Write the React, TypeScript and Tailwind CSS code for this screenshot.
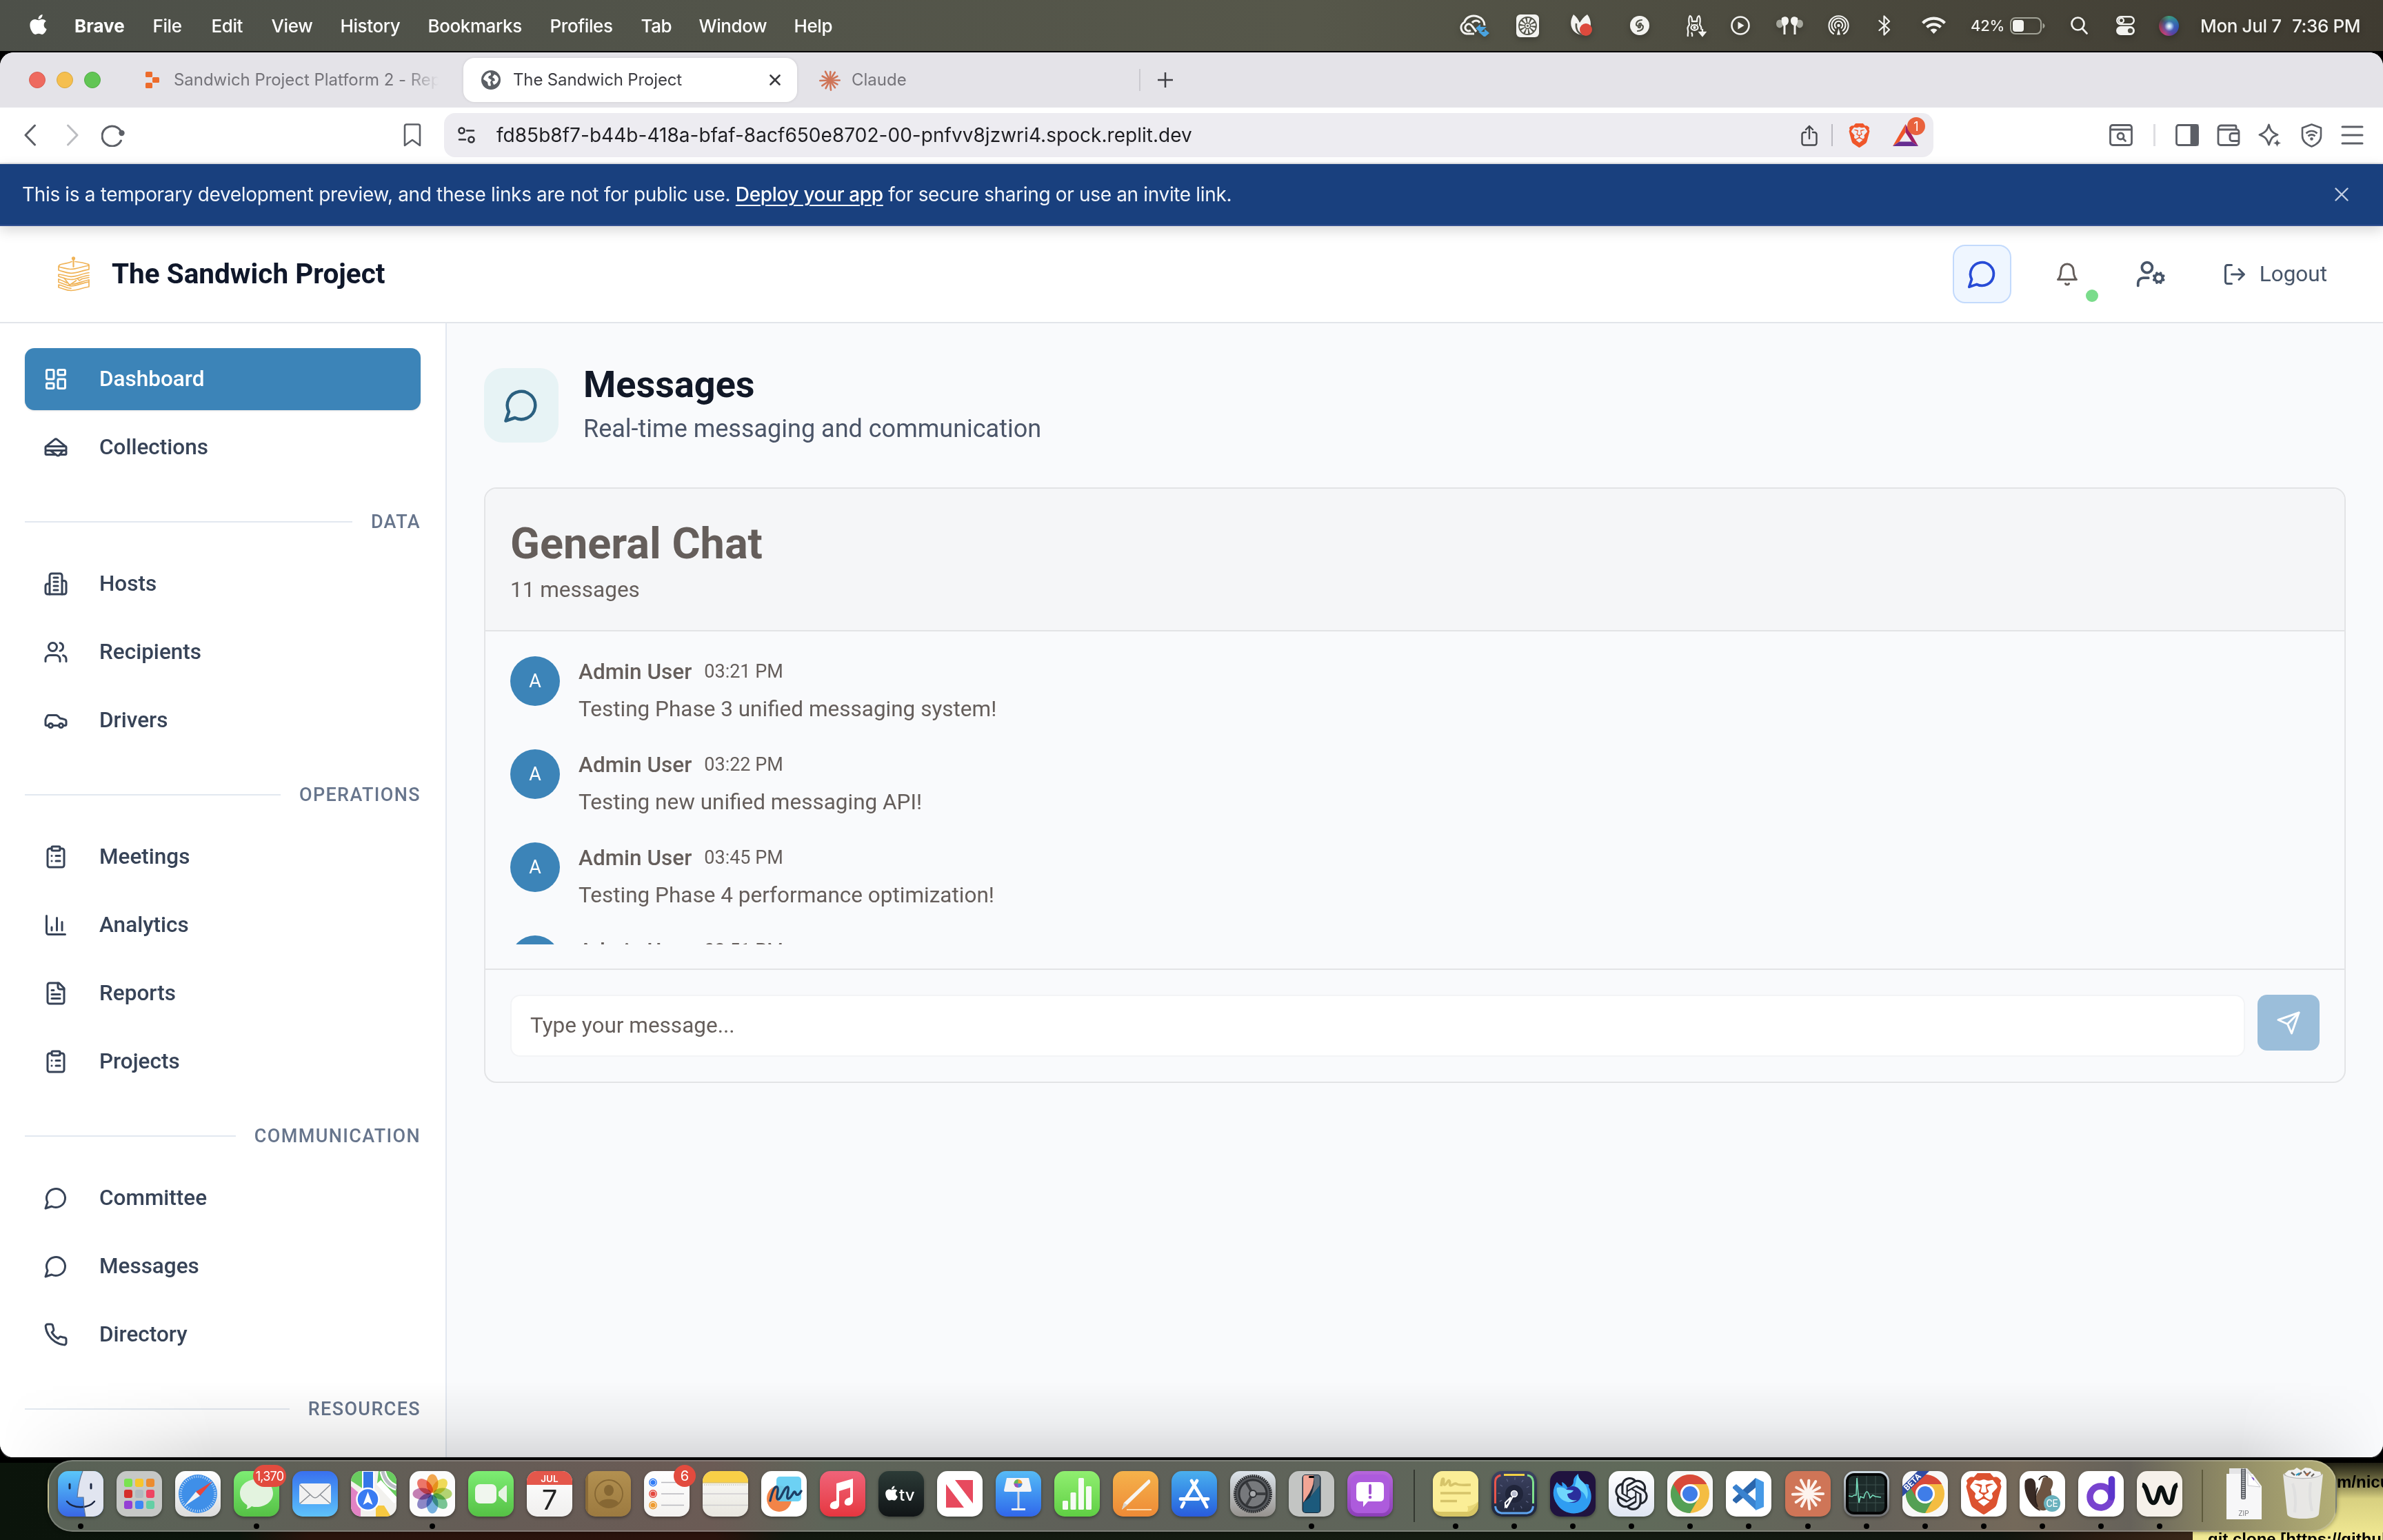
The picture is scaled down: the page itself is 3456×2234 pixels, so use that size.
import React from "react";
import { UserCog } from "lucide-react";
import { FaApple } from "react-icons/fa";
import { SiBrave, SiOpenai } from "react-icons/si";

type IconProps = { className?: string };

/* ---------- outline icons on a 24 unit grid ---------- */

function Outline({ className, children }: { className?: string; children: React.ReactNode }) {
  return (
    <svg viewBox="0 0 24 24" fill="none" stroke="currentColor" strokeWidth={2} strokeLinecap="round" strokeLinejoin="round" className={className}>
      {children}
    </svg>
  );
}

const DashboardIcon = ({ className }: IconProps) => (
  <Outline className={className}>
    <rect width="7" height="9" x="3" y="3" rx="1" />
    <rect width="7" height="5" x="14" y="3" rx="1" />
    <rect width="7" height="9" x="14" y="12" rx="1" />
    <rect width="7" height="5" x="3" y="16" rx="1" />
  </Outline>
);
const SandwichIcon = ({ className }: IconProps) => (
  <Outline className={className}>
    <path d="m2.37 11.223 8.372-6.777a2 2 0 0 1 2.516 0l8.371 6.777" />
    <path d="M21 15a1 1 0 0 1 1 1v2a1 1 0 0 1-1 1h-5.25" />
    <path d="M3 15a1 1 0 0 0-1 1v2a1 1 0 0 0 1 1h9" />
    <path d="m6.67 15 6.13 4.6a2 2 0 0 0 2.8-.4l3.15-4.2" />
    <rect width="20" height="4" x="2" y="11" rx="1" />
  </Outline>
);
const BuildingIcon = ({ className }: IconProps) => (
  <Outline className={className}>
    <path d="M6 22V4a2 2 0 0 1 2-2h8a2 2 0 0 1 2 2v18Z" />
    <path d="M6 12H4a2 2 0 0 0-2 2v6a2 2 0 0 0 2 2h2" />
    <path d="M18 9h2a2 2 0 0 1 2 2v9a2 2 0 0 1-2 2h-2" />
    <path d="M10 6h4M10 10h4M10 14h4M10 18h4" />
  </Outline>
);
const UsersIcon = ({ className }: IconProps) => (
  <Outline className={className}>
    <path d="M16 21v-2a4 4 0 0 0-4-4H6a4 4 0 0 0-4 4v2" />
    <circle cx="9" cy="7" r="4" />
    <path d="M22 21v-2a4 4 0 0 0-3-3.87" />
    <path d="M16 3.13a4 4 0 0 1 0 7.75" />
  </Outline>
);
const CarIcon = ({ className }: IconProps) => (
  <Outline className={className}>
    <path d="M19 17h2c.6 0 1-.4 1-1v-3c0-.9-.7-1.7-1.5-1.9C18.7 10.6 16 10 16 10s-1.3-1.4-2.2-2.3c-.5-.4-1.1-.7-1.8-.7H5c-.6 0-1.1.4-1.4.9l-1.4 2.9A3.7 3.7 0 0 0 2 12v4c0 .6.4 1 1 1h2" />
    <circle cx="7" cy="17" r="2" />
    <path d="M9 17h6" />
    <circle cx="17" cy="17" r="2" />
  </Outline>
);
const ClipboardIcon = ({ className }: IconProps) => (
  <Outline className={className}>
    <rect width="8" height="4" x="8" y="2" rx="1" />
    <path d="M16 4h2a2 2 0 0 1 2 2v14a2 2 0 0 1-2 2H6a2 2 0 0 1-2-2V6a2 2 0 0 1 2-2h2" />
    <path d="M12 11h4M12 16h4M8 11h.01M8 16h.01" />
  </Outline>
);
const ChartIcon = ({ className }: IconProps) => (
  <Outline className={className}>
    <path d="M3 3v16a2 2 0 0 0 2 2h16" />
    <path d="M18 17V9M13 17V5M8 17v-3" />
  </Outline>
);
const FileIcon = ({ className }: IconProps) => (
  <Outline className={className}>
    <path d="M15 2H6a2 2 0 0 0-2 2v16a2 2 0 0 0 2 2h12a2 2 0 0 0 2-2V7Z" />
    <path d="M14 2v4a2 2 0 0 0 2 2h4" />
    <path d="M10 9H8M16 13H8M16 17H8" />
  </Outline>
);
const ChatIcon = ({ className }: IconProps) => (
  <Outline className={className}>
    <path d="M7.9 20A9 9 0 1 0 4 16.1L2 22Z" />
  </Outline>
);
const PhoneIcon = ({ className }: IconProps) => (
  <Outline className={className}>
    <path d="M22 16.92v3a2 2 0 0 1-2.18 2 19.79 19.79 0 0 1-8.63-3.07 19.5 19.5 0 0 1-6-6 19.79 19.79 0 0 1-3.07-8.67A2 2 0 0 1 4.11 2h3a2 2 0 0 1 2 1.72 12.84 12.84 0 0 0 .7 2.81 2 2 0 0 1-.45 2.11L8.09 9.91a16 16 0 0 0 6 6l1.27-1.27a2 2 0 0 1 2.11-.45 12.84 12.84 0 0 0 2.81.7A2 2 0 0 1 22 16.92z" />
  </Outline>
);
const BellIcon = ({ className }: IconProps) => (
  <Outline className={className}>
    <path d="M6 8a6 6 0 0 1 12 0c0 7 3 9 3 9H3s3-2 3-9" />
    <path d="M10.3 21a1.94 1.94 0 0 0 3.4 0" />
  </Outline>
);
const LogOutIcon = ({ className }: IconProps) => (
  <Outline className={className}>
    <path d="M9 21H5a2 2 0 0 1-2-2V5a2 2 0 0 1 2-2h4" />
    <path d="m16 17 5-5-5-5M21 12H9" />
  </Outline>
);
const SendIcon = ({ className }: IconProps) => (
  <Outline className={className}>
    <path d="m22 2-7 20-4-9-9-4Z" />
    <path d="M22 2 11 13" />
  </Outline>
);

/* ---------- macOS menu bar ---------- */

function StatusIcons() {
  return (
    <div className="flex h-full items-center text-[#f3f3f0] drop-shadow-[0_3px_4px_rgba(0,0,0,0.25)]">
      <svg viewBox="0 0 44 32" className="h-8 w-11" fill="none" stroke="currentColor" strokeWidth="3">
        <path d="M22 28H11a9 9 0 0 1-3-17C10 4 19 0 27 3c6 2 10 7 10 13" />
        <path d="M17 23c-5 3-10-2-7-7 3-4 7-2 9 1l6 8M19 12c3-4 9-4 11 0" />
        <path d="M24 20h9v-4l7 6-7 6z" fill="#4aa3df" stroke="none" transform="translate(64 -2) scale(-1 1)" />
        <path d="M28 25h9v-4l7 6-7 6z" fill="#4aa3df" stroke="none" />
      </svg>
      <svg viewBox="0 0 33 33" className="ml-[39px] size-[33px]">
        <rect width="33" height="33" rx="6" fill="currentColor" />
        <circle cx="16.5" cy="16.5" r="12.5" fill="none" stroke="#53544a" strokeWidth="1.8" />
        <circle cx="16.5" cy="16.5" r="8" fill="none" stroke="#53544a" strokeWidth="8" strokeDasharray="2 3" />
        <circle cx="16.5" cy="16.5" r="4" fill="#f3f3f0" stroke="#53544a" strokeWidth="1.5" />
        <circle cx="16.5" cy="16.5" r="1.6" fill="#53544a" />
      </svg>
      <svg viewBox="0 0 34 32" className="ml-[43px] h-8 w-[34px]">
        <path d="M7 0c4 3 7 7 9 12 3-5 6-9 11-12 5 6 6 14 4 20l-11 10C6 29-2 15 7 0z" fill="currentColor" />
        <path d="M11 13c-1 8 3 14 9 17" stroke="#53544a" strokeWidth="2.5" fill="none" />
        <circle cx="25" cy="22" r="9" fill="#dc4a3d" />
      </svg>
      <svg viewBox="0 0 28 28" className="ml-[55px] size-7">
        <circle cx="14" cy="14" r="14" fill="currentColor" />
        <path d="M17 6c-5 0-8 3-8 6 0 4 6 3 7 1 1-3-3-3-3 0M11 22c5 0 8-3 8-6 0-4-6-3-7-1-1 3 3 3 3 0" stroke="#53544a" strokeWidth="2.2" fill="none" strokeLinecap="round" />
      </svg>
      <svg viewBox="0 0 30 33" className="ml-[53px] h-[33px] w-[30px]" fill="none" stroke="currentColor" strokeWidth="2.3">
        <path d="M3 32c-1-4 1-6 0-9s0-6 2-8c-1-5-1-11 1-13 3 1 3 5 3 8h7c0-3 0-7 3-8 2 2 2 8 1 13 2 2 3 4 2 7" />
        <ellipse cx="12.500" cy="19" rx="5" ry="3.8" />
        <circle cx="12.500" cy="19" r="1" fill="currentColor" />
        <path d="M8 14.500h1M16 14.500h1" />
        <path d="M9 32c1-3 0-4-1-6" />
        <path d="M24 21v9M20 26l4 5 4-5z" fill="currentColor" />
      </svg>
      <svg viewBox="0 0 28 28" className="ml-[35px] size-7">
        <circle cx="14" cy="14" r="12.500" fill="none" stroke="currentColor" strokeWidth="2.600" />
        <path d="M10.500 8.500v11l9-5.500z" fill="currentColor" />
      </svg>
      <svg viewBox="0 0 39 27" className="ml-[38px] h-[27px] w-[39px]">
        <ellipse cx="5" cy="10.500" rx="5" ry="6" fill="#a5a69c" />
        <ellipse cx="34" cy="10.500" rx="5" ry="6" fill="#a5a69c" />
        <path d="M8 2c5-3.500 10-1.500 10 4 0 4-2.500 6-4.500 7v13H10.500V14C8 10 7 6 8 2z" fill="currentColor" />
        <path d="M31 2c-5-3.500-10-1.500-10 4 0 4 2.500 6 4.500 7v13h3V14c2.500-4 3.500-8 2.500-12z" fill="currentColor" />
      </svg>
      <svg viewBox="0 0 31 30" className="ml-9 h-[30px] w-[31px]" fill="none" stroke="currentColor" strokeWidth="2.100" strokeLinecap="round">
        <path d="M8 27A14 14 0 1 1 23 27" />
        <path d="M9.500 22.500A10 10 0 1 1 21.500 22.500" />
        <path d="M11.500 18.500A5.700 5.700 0 1 1 19.500 18.500" />
        <circle cx="15.500" cy="15" r="2.200" fill="currentColor" stroke="none" />
        <path d="M15.500 19l2.500 9.500h-5z" fill="currentColor" stroke="none" />
      </svg>
      <svg viewBox="0 0 18 30" className="ml-[42px] h-[30px] w-[18px]" fill="none" stroke="currentColor" strokeWidth="2.300" strokeLinejoin="round" strokeLinecap="round">
        <path d="M1.500 8l14.500 13-7.500 7.500V1.500L16 9 1.500 22" />
      </svg>
      <svg viewBox="0 0 35 26" className="ml-[45px] h-[26px] w-[35px]" fill="none" stroke="currentColor" strokeWidth="4.200">
        <path d="M1.500 9.500a22 22 0 0 1 32 0" />
        <path d="M7.500 15.500a14 14 0 0 1 20 0" />
        <path d="M17.500 25l-5-5.500a7 7 0 0 1 10 0z" fill="currentColor" stroke="none" />
      </svg>
      <span className="ml-9 w-[50px] text-[22px] tracking-[-0.3px]">42%</span>
      <svg viewBox="0 0 51 25" className="ml-[7px] h-[25px] w-[51px]">
        <rect x="1" y="1" width="44" height="23" rx="7" fill="none" stroke="#a2a397" strokeWidth="2" />
        <rect x="4" y="4" width="16" height="17" rx="4" fill="currentColor" />
        <path d="M47.500 8.500c4 1.500 4 6.500 0 8z" fill="#a2a397" />
      </svg>
      <svg viewBox="0 0 25 26" className="ml-[37px] h-[26px] w-[25px]" fill="none" stroke="currentColor" strokeWidth="2.700" strokeLinecap="round">
        <circle cx="10.500" cy="10.500" r="9" />
        <path d="M17 17.500l6.500 7" />
      </svg>
      <svg viewBox="0 0 27 28" className="ml-[41px] h-7 w-[27px]">
        <rect x="1.200" y="1.200" width="24.600" height="11" rx="5.500" fill="none" stroke="currentColor" strokeWidth="2.400" />
        <circle cx="7.500" cy="6.700" r="3.500" fill="none" stroke="currentColor" strokeWidth="2.200" />
        <rect y="15" width="27" height="13" rx="6.500" fill="currentColor" />
        <circle cx="20.500" cy="21.500" r="3.600" fill="#4c4b41" />
      </svg>
      <span className="ml-[35px] size-[29px] rounded-full bg-[radial-gradient(circle_at_52%_52%,#ffffff_0%,rgba(190,225,250,0.9)_14%,rgba(70,100,190,0.6)_34%,transparent_60%),conic-gradient(#3f9c7c,#2b7f9e,#3450b0,#5a3fa0,#c23f7a,#a03a56,#4a4a50,#3f9c7c)]" />
      <span className="ml-[31px] w-[133px] text-[26px] tracking-[-0.35px]">Mon Jul 7</span>
      <span className="text-[26px] tracking-[-0.4px]">7:36 PM</span>
    </div>
  );
}

const MENUS: [string, string][] = [
  ["File", "w-[85px]"],
  ["Edit", "w-[87px]"],
  ["View", "w-[100px]"],
  ["History", "w-[127px]"],
  ["Bookmarks", "w-[177px]"],
  ["Profiles", "w-[132px]"],
  ["Tab", "w-[84px]"],
  ["Window", "w-[138px]"],
  ["Help", "w-[70px]"],
];

function MenuBar() {
  return (
    <div className="flex h-[74px] shrink-0 items-center bg-linear-to-r from-[#4d5049] via-[#56574a] via-55% to-[#3f3b31] font-['Inter',sans-serif] font-medium text-white">
      <FaApple className="-mt-1 ml-[39px] size-[33px]" />
      <span className="ml-9 w-[113.5px] text-[26px] font-bold">Brave</span>
      {MENUS.map(([label, width]) => (
        <span key={label} className={`${width} text-[26px] tracking-[-0.4px]`}>
          {label}
        </span>
      ))}
      <div className="ml-auto h-full w-[1340px]">
        <StatusIcons />
      </div>
    </div>
  );
}

/* ---------- browser chrome ---------- */

const RAYS: [number, number][] = [
  [4, 44],
  [32, 48],
  [62, 44],
  [90, 50],
  [118, 44],
  [145, 46],
  [174, 50],
  [207, 46],
  [235, 48],
  [268, 50],
  [299, 44],
  [333, 50],
];

function BurstRays({ color }: { color: string }) {
  return (
    <g stroke={color} strokeWidth="8.500" strokeLinecap="round">
      {RAYS.map(([a, r]) => (
        <path key={a} d={`M0 0V${-(r - 4)}`} transform={`rotate(${a})`} />
      ))}
    </g>
  );
}

function TabStrip() {
  return (
    <div className="flex h-20 shrink-0 items-center bg-[#e4e3e8] font-['Inter',sans-serif] text-[24px] text-[#75747a]">
      <div className="ml-[42px] flex gap-4">
        <span className="size-6 rounded-full border border-[#d65d52] bg-[#ee6a5f]" />
        <span className="size-6 rounded-full border border-[#d9a83f] bg-[#f5bf4f]" />
        <span className="size-6 rounded-full border border-[#52ab46] bg-[#61c554]" />
      </div>
      <svg viewBox="0 0 20 24" className="ml-[65px] h-6 w-5" fill="#ed6c2c">
        <rect width="10" height="8" rx="1.500" />
        <rect x="10" y="8" width="10" height="8" rx="1.500" />
        <rect y="16" width="10" height="8" rx="1.500" />
      </svg>
      <span className="ml-[21px] w-[388px] overflow-hidden whitespace-nowrap tracking-[-0.05px] [mask-image:linear-gradient(to_right,black_87%,transparent_99%)]">
        Sandwich Project Platform 2 - Replit
      </span>
      <div className="ml-8 flex h-16 w-[484px] items-center rounded-2xl bg-white text-[#3d3d42] shadow-[0_0_4px_rgba(0,0,0,0.1)]">
        <svg viewBox="0 0 28 28" className="ml-[26px] size-7">
          <circle cx="14" cy="14" r="14" fill="#5b5f65" />
          <path d="M13 3c-5 1-9 5-10 10l6 4 1 5c2 1 3 1 4 0l-1-5 2-3-5-3 1-3c3 0 4-2 2-5z" fill="#fff" />
          <path d="M19 6l-3 4 3 2 1 3-4 1 2 5c4-1 7-5 7-9-1-3-3-5-6-6z" fill="#fff" />
        </svg>
        <span className="ml-[18px] tracking-[-0.15px]">The Sandwich Project</span>
        <svg viewBox="0 0 16 16" className="ml-auto mr-6 size-4" stroke="#3a3a3e" strokeWidth="2.600" strokeLinecap="round">
          <path d="M1.500 1.500l13 13M14.500 1.500l-13 13" />
        </svg>
      </div>
      <svg viewBox="-50 -50 100 100" className="ml-8 size-[31px]">
        <BurstRays color="#cf7558" />
      </svg>
      <span className="ml-[16px] w-[417px]">Claude</span>
      <span className="h-8 w-0.5 bg-[#cbcad0]" />
      <svg viewBox="0 0 22 22" className="ml-[25px] size-[22px]" stroke="#3f3f44" strokeWidth="2.500">
        <path d="M11 0v22M0 11h22" />
      </svg>
    </div>
  );
}

function Toolbar() {
  return (
    <div className="flex h-[82px] shrink-0 items-center border-b-2 border-[#e5e5e8] bg-white font-['Inter',sans-serif] text-[#5c5f66]">
      <svg viewBox="0 0 18 32" className="ml-[35px] h-8 w-[18px]" fill="none" stroke="currentColor" strokeWidth="3" strokeLinecap="round" strokeLinejoin="round">
        <path d="M15.500 2 2 16l13.500 14" />
      </svg>
      <svg viewBox="0 0 18 32" className="ml-[43px] h-8 w-[18px] text-[#bcbdc1]" fill="none" stroke="currentColor" strokeWidth="3" strokeLinecap="round" strokeLinejoin="round">
        <path d="M2.500 2 16 16 2.500 30" />
      </svg>
      <svg viewBox="0 0 35 33" className="ml-[33px] h-[33px] w-[35px]" fill="none" stroke="currentColor" strokeWidth="3" strokeLinecap="round">
        <path d="M29 12A14.500 14.500 0 1 0 28.500 24" />
        <circle cx="29.500" cy="13" r="4.200" fill="currentColor" stroke="none" />
      </svg>
      <svg viewBox="0 0 26 34" className="ml-[403px] h-[34px] w-[26px]" fill="none" stroke="currentColor" strokeWidth="2.600" strokeLinejoin="round">
        <path d="M2 4a2.500 2.500 0 0 1 2.500-2.500h17A2.500 2.500 0 0 1 24 4v28l-11-8-11 8z" />
      </svg>
      <div className="ml-[33px] flex h-16 w-[2160px] items-center rounded-2xl bg-[#edecf1]">
        <svg viewBox="0 0 26 24" className="ml-5 h-6 w-[26px]" fill="none" stroke="#303136" strokeWidth="2.600" strokeLinecap="round">
          <circle cx="5.500" cy="5.500" r="4" />
          <path d="M13 5.500h10M2 18.500h9" />
          <circle cx="19.500" cy="18.500" r="4" />
        </svg>
        <span className="ml-[30px] text-[28px] tracking-[0.035px] text-[#1e1e22]">fd85b8f7-b44b-418a-bfaf-8acf650e8702-00-pnfvv8jzwri4.spock.replit.dev</span>
        <div className="ml-auto flex items-center">
          <svg viewBox="0 0 24 31" className="h-[31px] w-6" fill="none" stroke="#45474c" strokeWidth="2.400" strokeLinecap="round" strokeLinejoin="round">
            <path d="M7 11H4.500A3 3 0 0 0 1.500 14v12.500a3 3 0 0 0 3 3h15a3 3 0 0 0 3-3V14a3 3 0 0 0-3-3H17M12 20V2M7 7l5-5 5 5" />
          </svg>
          <span className="ml-5 h-8 w-0.5 bg-[#bcbbc2]" />
          <SiBrave className="ml-[21px] size-[35px] text-[#f0562a]" />
          <div className="relative ml-[31px] mr-[22px]">
            <svg viewBox="0 0 37 32" className="h-8 w-[37px]">
              <path d="M18.500 0v12L9.500 25.500 0 32z" fill="#f0562a" />
              <path d="M18.500 0 37 32l-9.500-6.500-9-13.500z" fill="#9e1f63" />
              <path d="M0 32l9.500-6.500h18L37 32z" fill="#662d91" />
            </svg>
            <span className="absolute -top-2.5 left-[21px] flex size-[26px] items-center justify-center rounded-full bg-[#e9623d] text-[18px] text-white">1</span>
          </div>
        </div>
      </div>
      <svg viewBox="0 0 34 32" className="ml-[255px] h-8 w-[34px]" fill="none" stroke="currentColor" strokeWidth="2.800" strokeLinecap="round">
        <rect x="1.500" y="1.500" width="31" height="29" rx="3.500" />
        <path d="M2 8h30" />
        <circle cx="16.500" cy="17.500" r="4.500" />
        <path d="M20 21l3.500 3.500" />
      </svg>
      <span className="ml-[30px] h-8 w-[3px] bg-[#dedee2]" />
      <svg viewBox="0 0 34 32" className="ml-[29px] h-8 w-[34px]" fill="none" stroke="currentColor" strokeWidth="2.800">
        <rect x="1.500" y="1.500" width="31" height="29" rx="3" />
        <path d="M23 2h9v28h-9z" fill="currentColor" />
      </svg>
      <svg viewBox="0 0 34 32" className="ml-[26px] h-8 w-[34px]" fill="none" stroke="currentColor" strokeWidth="2.800" strokeLinejoin="round">
        <path d="M2 6a4 4 0 0 1 4-4h20a2 2 0 0 1 2 2v4M2 6v21a3.500 3.500 0 0 0 3.500 3.500h23A3.500 3.500 0 0 0 32 27V11a3 3 0 0 0-3-3H5a3 3 0 0 1-3-2z" />
        <path d="M32 13.500H22a3 3 0 0 0-3 3v5a3 3 0 0 0 3 3h10" />
      </svg>
      <svg viewBox="0 0 34 34" className="ml-[26px] size-[34px]" fill="none" stroke="currentColor" strokeWidth="2.800" strokeLinejoin="round">
        <path d="M15.500 2c2 8 4 11 12.500 14.500C24 18 22 19 20 21c-2 3-3 6-4.500 10C13 23 11 20 2 16.500 11 13 13 10 15.500 2z" />
        <path d="M27.500 23c1 3.500 2 4.500 5.500 5.500-3.500 1-4.500 2-5.500 5.500-1-3.500-2-4.500-5.500-5.500 3.500-1 4.500-2 5.500-5.500z" fill="currentColor" stroke="none" />
      </svg>
      <svg viewBox="0 0 31 35" className="ml-[28px] h-[35px] w-[31px]" fill="none" stroke="currentColor" strokeWidth="2.600" strokeLinejoin="round">
        <path d="M15.500 1.500 29 6.500V18c0 8-7 13-13.500 15.500C9 31 2 26 2 18V6.500z" />
        <path d="M7.500 14.500a11 11 0 0 1 16 0M10.500 18.500a7 7 0 0 1 10 0" />
        <circle cx="15.500" cy="22.500" r="2.300" fill="currentColor" stroke="none" />
      </svg>
      <svg viewBox="0 0 33 28" className="ml-[27px] h-7 w-[33px]" stroke="currentColor" strokeWidth="3" strokeLinecap="round">
        <path d="M2 2h29M2 14h29M2 26h29" />
      </svg>
    </div>
  );
}

/* ---------- page ---------- */

function PreviewBanner() {
  return (
    <div className="relative z-10 flex h-[90px] shrink-0 items-center justify-between border-b-2 border-[#325190] bg-[#19407e] pl-8 pr-[50px] font-['Inter',sans-serif] text-[28px] tracking-[-0.345px] text-[#f3f6fb] shadow-[0_6px_18px_rgba(0,0,0,0.16)]">
      <p>
        This is a temporary development preview, and these links are not for public use.{" "}
        <span className="font-medium text-white underline decoration-2 underline-offset-[5px]">Deploy your app</span> for secure sharing or use an invite link.
      </p>
      <svg viewBox="0 0 20 20" className="size-5" stroke="#c3cfe3" strokeWidth="2.400" strokeLinecap="round">
        <path d="M1.500 1.500l17 17M18.500 1.500l-17 17" />
      </svg>
    </div>
  );
}

function SandwichLogo({ className }: IconProps) {
  return (
    <svg viewBox="0 0 46 51" className={className} fill="none" stroke="#f0b357" strokeWidth="1.700" strokeLinejoin="round" strokeLinecap="round">
      <circle cx="22.500" cy="2.800" r="1.800" fill="#f0b357" />
      <path d="M22.500 4v11" strokeWidth="2.200" />
      <path d="M20 7.500c-6 3-10 2-17 4.500q-3 2 0 3.500c5 1 9 2.500 15 3 10 0 15-3.500 25-5q2.500-.8 1.500-2C39 9.500 31 8 25 7.500" />
      <path d="M1 14v6c6 1.500 10 4 18 4.300 9 0 16-4 26-5.500v-6" />
      <path d="M1 26c6 0 11 3 18 3.300 9 0 16-4.500 26-5.800M1 26v3l8 2.500 8 10 9.500-6.500" />
      <path d="M9 31.500c5 2 10 2.500 15 1.500 8-2 13-5 21-5.500M29 33l2 2 4-2.500 10-2" />
      <path d="M1 33c6 2 9 4 12 5.500M45 34c-9 1.500-16 6-25 6.500" />
      <path d="M1 33v4.500c6 1 10 5 18 5.300 9 0 16-4.500 26-6V34" />
      <path d="M1 41c6 1 10 5 18 5.300M1 41v4c6 1 10 4.300 18 4.500 9 0 16-4 26-5.500v-7" />
    </svg>
  );
}

function AppHeader() {
  return (
    <header className="flex h-[141px] shrink-0 items-center border-b-2 border-[#e2e5ea] bg-white font-['Roboto',sans-serif]">
      <SandwichLogo className="ml-[84px] h-[51px] w-[46px]" />
      <h1 className="ml-8 text-[40.5px] font-bold text-[#0f172a]">The Sandwich Project</h1>
      <div className="ml-auto flex items-center text-[#475569]">
        <button className="flex size-[85px] items-center justify-center rounded-[18px] border-2 border-[#c3dafc] bg-[#eff6ff] text-[#274bd6]">
          <ChatIcon className="size-[45px]" />
        </button>
        <div className="relative ml-[63px]">
          <BellIcon className="size-9 text-[#655e5b]" />
          <span className="absolute left-[45px] top-10 size-[18px] rounded-full bg-[#7adc8b]" />
        </div>
        <UserCog className="ml-[81px] size-[45px]" />
        <LogOutIcon className="ml-[81px] size-9" />
        <span className="ml-[18px] mr-[81px] text-[31.5px]">Logout</span>
      </div>
    </header>
  );
}

type NavEntry = { label: string; icon: React.ComponentType<IconProps> };
const NAV: { title?: string; items: NavEntry[] }[] = [
  { items: [{ label: "Dashboard", icon: DashboardIcon }, { label: "Collections", icon: SandwichIcon }] },
  { title: "DATA", items: [{ label: "Hosts", icon: BuildingIcon }, { label: "Recipients", icon: UsersIcon }, { label: "Drivers", icon: CarIcon }] },
  {
    title: "OPERATIONS",
    items: [
      { label: "Meetings", icon: ClipboardIcon },
      { label: "Analytics", icon: ChartIcon },
      { label: "Reports", icon: FileIcon },
      { label: "Projects", icon: ClipboardIcon },
    ],
  },
  { title: "COMMUNICATION", items: [{ label: "Committee", icon: ChatIcon }, { label: "Messages", icon: ChatIcon }, { label: "Directory", icon: PhoneIcon }] },
  { title: "RESOURCES", items: [] },
];

function Sidebar() {
  return (
    <nav className="w-[648px] shrink-0 overflow-hidden border-r-2 border-[#e2e8f0] bg-white p-9 text-[31.5px] font-medium text-[#374357]">
      {NAV.map((group, g) => (
        <div key={g}>
          {group.title && (
            <div className="mb-[27px] mt-[45px] flex h-9 items-center">
              <span className="h-0.5 flex-1 bg-[#e2e8f0]" />
              <span className="ml-[27px] text-[27px] tracking-[0.05em] text-[#67758c]">{group.title}</span>
            </div>
          )}
          <div className="flex flex-col gap-[9px]">
            {group.items.map(({ label, icon: Icon }) => (
              <div
                key={label}
                className={label === "Dashboard" ? "flex h-[90px] items-center rounded-[14px] bg-[#3c84b8] pl-[27px] text-white shadow-sm" : "flex h-[90px] items-center pl-[27px]"}
              >
                <Icon className="size-9" />
                <span className="ml-[45px]">{label}</span>
              </div>
            ))}
          </div>
        </div>
      ))}
    </nav>
  );
}

const CHAT = [
  { time: "03:21 PM", text: "Testing Phase 3 unified messaging system!" },
  { time: "03:22 PM", text: "Testing new unified messaging API!" },
  { time: "03:45 PM", text: "Testing Phase 4 performance optimization!" },
  { time: "03:51 PM", text: "" },
];

function MessagesPage() {
  return (
    <main className="flex-1 bg-[#f9fafc] p-[54px] text-[31.5px] text-[#655e5b]">
      <div className="flex items-center gap-9">
        <div className="flex size-[108px] items-center justify-center rounded-[27px] bg-[#e7f3f5]">
          <ChatIcon className="size-[54px] text-[#2b6080]" />
        </div>
        <div>
          <h2 className="text-[54px] font-bold leading-[69px] text-[#111827]">Messages</h2>
          <p className="text-[36px] leading-[61px] text-[#4b5568]">Real-time messaging and communication</p>
        </div>
      </div>

      <section className="mt-[54px] overflow-hidden rounded-[18px] border-2 border-[#e3e4e6]">
        <div className="border-b-2 border-[#e3e4e6] bg-[#f5f6f8] p-9">
          <h3 className="text-[63px] font-bold leading-[88px]">General Chat</h3>
          <p className="leading-[45px]">11 messages</p>
        </div>
        <div className="border-b-2 border-[#e3e4e6] px-9 pb-[35px] pt-9">
          <div className="flex h-[418px] flex-col gap-9 overflow-hidden">
            {CHAT.map((m) => (
              <div key={m.time} className="flex h-[99px] shrink-0 gap-[27px]">
                <span className="flex size-[72px] items-center justify-center rounded-full bg-[#3c84b8] text-[27px] text-white">A</span>
                <div>
                  <div className="flex items-center gap-[18px]">
                    <span className="font-medium leading-[45px]">Admin User</span>
                    <span className="pb-0.5 text-[27px] leading-9">{m.time}</span>
                  </div>
                  <p className="mt-[9px] leading-[45px]">{m.text}</p>
                </div>
              </div>
            ))}
          </div>
        </div>
        <div className="flex items-start gap-[18px] p-9">
          <div className="flex h-[90px] flex-1 items-center rounded-[14px] border-2 border-[#f3f4f6] bg-white pl-[27px]">Type your message...</div>
          <button className="flex h-[81px] w-[90px] items-center justify-center rounded-[14px] bg-[#9bbeda] text-white">
            <SendIcon className="size-9" />
          </button>
        </div>
      </section>
    </main>
  );
}

/* ---------- dock ---------- */

function Tile({ className, running, badge, children }: { className: string; running?: boolean; badge?: string; children?: React.ReactNode }) {
  return (
    <div className="relative size-[66px]">
      <svg viewBox="0 0 66 66" className={`${className} size-[66px] overflow-hidden rounded-[15px] shadow-[0_2px_4px_rgba(0,0,0,0.35)]`}>
        {children}
      </svg>
      {badge && (
        <span
          className={
            badge.length > 1
              ? "absolute -top-[9px] left-7 flex h-8 w-12 items-center justify-center rounded-full bg-[#e24b3e] font-['Inter',sans-serif] text-[18px] tracking-[-0.8px] text-white"
              : "absolute -top-[9px] left-[43px] flex size-8 items-center justify-center rounded-full bg-[#e24b3e] font-['Inter',sans-serif] text-[20px] text-white"
          }
        >
          {badge}
        </span>
      )}
      {running && <span className="absolute left-[29px] top-[76px] size-2 rounded-full bg-black" />}
    </div>
  );
}

function ChromeMark() {
  return (
    <g>
      <circle cx="33" cy="33" r="28" fill="#f4bd42" />
      <path d="M33 33 8.700 19A28 28 0 0 0 33 61L45 40z" fill="#54a055" />
      <path d="M8.700 19A28 28 0 0 1 57.300 19H33L21 40z" fill="#d84a3a" />
      <circle cx="33" cy="33" r="14" fill="#fff" />
      <circle cx="33" cy="33" r="11" fill="#3f7de8" />
    </g>
  );
}

const PETALS: [number, string][] = [
  [0, "#f39a33"],
  [45, "#f0d73c"],
  [90, "#a8cf5a"],
  [135, "#63bd84"],
  [180, "#5fa5dd"],
  [225, "#7a74c0"],
  [270, "#bd6ba8"],
  [315, "#ec5f50"],
];

const LAUNCH = ["#79e34f", "#f7c52b", "#ec8c2f", "#d4302a", "#b0b9c0", "#ee4563", "#9440d4", "#3d86f5", "#63cfa4"];

function Dock() {
  return (
    <div className="mt-1 ml-[69px] flex h-[104px] w-[3320px] items-start rounded-[36px] border-2 border-white/20 bg-[linear-gradient(to_right,#596256_0%,#5d6157_8%,#665c56_20%,#6b5b55_29%,#5e6559_34%,#5f6059_45%,#5f655a_58%,#606a5a_70%,#66625a_80%,#74695a_86%,#66625a_91%,#8d8864_95%,#b3ae76_100%)] pl-[13px] pt-3.5 shadow-[0_0_6px_rgba(0,0,0,0.4)]">
      <div className="flex gap-[19px]">
        <Tile running className="bg-linear-to-b from-[#5bc7f9] to-[#3a66e4]">
          <path d="M36 0c-5 12-7 24-8 38h9c0 10 1 19 3 28h26V0z" fill="#e1e5f0" />
          <path d="M17 19v6M48 19v6" stroke="#1a2540" strokeWidth="3" strokeLinecap="round" />
          <path d="M13 44c9 11 31 11 40 0" fill="none" stroke="#1a2540" strokeWidth="2.400" strokeLinecap="round" />
          <path d="M36 0c-5 12-7 24-8 38h9c0 10 1 19 3 28" fill="none" stroke="#5d7396" strokeWidth="1.200" />
        </Tile>
        <Tile className="bg-[#c6c8c6]">
          {LAUNCH.map((c, i) => (
            <rect key={c} x={11 + (i % 3) * 16} y={11 + Math.floor(i / 3) * 16} width="12" height="12" rx="3" fill={c} />
          ))}
        </Tile>
        <Tile className="bg-linear-to-b from-white to-[#dcdcdc]">
          <circle cx="33" cy="33" r="28" fill="#3f8fe8" />
          <circle cx="33" cy="33" r="25" fill="none" stroke="#d6e8fb" strokeWidth="3.500" strokeDasharray="0.900 2.370" />
          <path d="M54 15 30 30l6 6z" fill="#e8453c" />
          <path d="M13 51l17-21 6 6z" fill="#f1f1f3" />
        </Tile>
        <Tile running badge="1,370" className="bg-linear-to-b from-[#7ded73] to-[#55c145]">
          <path d="M33 12c13 0 24 8 24 20S46 52 33 52c-3 0-5 0-7-1-2 2-5 4-8 4 2-2 2-4 1-6-6-4-10-9-10-17 0-12 11-20 24-20z" fill="#e3f3df" />
        </Tile>
        <Tile className="bg-linear-to-b from-[#3a70ee] to-[#5fc2fa]">
          <rect x="10" y="18" width="46" height="30" rx="4" fill="#f2f2f2" />
          <path d="M11 20l18 17q4 3.500 8 0l18-17M11 47l15-13M55 47 40 34" fill="none" stroke="#8d9197" strokeWidth="1.600" />
        </Tile>
        <Tile className="bg-[#f2f1ee]">
          <path d="M0 0h18v26L0 14zM40 0h26v44L38 18z" fill="#69cc5f" />
          <path d="M0 22l14 12v32H0z" fill="#e283c4" />
          <path d="M36 66V50l12 0 10 16z" fill="#f6c840" />
          <path d="M46 0c2 10 8 20 20 24M66 44 40 16" stroke="#fff" strokeWidth="9" fill="none" />
          <path d="M46 0c2 10 8 20 20 24" stroke="#b9bcc4" strokeWidth="5" fill="none" />
          <rect x="17" width="16" height="40" fill="#3478e8" stroke="#fff" strokeWidth="2" />
          <circle cx="24.500" cy="41" r="16" fill="#3a7bf2" stroke="#fff" strokeWidth="2.500" />
          <path d="M24.500 30l7 19-7-4-7 4z" fill="#fff" />
        </Tile>
        <Tile running className="bg-[#fcfcfc]">
          {PETALS.map(([a, c]) => (
            <ellipse key={a} cx="33" cy="18" rx="8.500" ry="13.500" fill={c} fillOpacity="0.850" transform={`rotate(${a} 33 33)`} className="mix-blend-multiply" />
          ))}
        </Tile>
        <Tile className="bg-linear-to-b from-[#7ded73] to-[#55c145]">
          <rect x="10" y="19" width="31" height="28" rx="7" fill="#f0f6ee" />
          <path d="M44 30l10-9q2-1 2 1v22q0 2-2 1l-10-9z" fill="#e6f3e2" />
        </Tile>
        <Tile className="bg-linear-to-b from-white to-[#f0efee]">
          <path d="M0 0h66v20H0z" fill="#e4574b" />
          <text x="33" y="16" textAnchor="middle" fontFamily="Inter" fontWeight="600" fontSize="13.500" fill="#fff">JUL</text>
          <text x="33" y="56" textAnchor="middle" fontFamily="Inter" fontWeight="400" fontSize="40" fill="#222">7</text>
        </Tile>
        <Tile className="bg-linear-to-b from-[#b29050] to-[#9c7a40]">
          <path d="M0 0h4v66H0z" fill="#8c6c38" />
          <circle cx="34" cy="33" r="20" fill="none" stroke="#866733" strokeWidth="1.800" />
          <ellipse cx="34" cy="28" rx="7" ry="8" fill="#866733" />
          <path d="M20 46c4-7 24-7 28 0-7 9-21 9-28 0z" fill="#866733" />
        </Tile>
        <Tile badge="6" className="bg-linear-to-b from-white to-[#f3f2f0]">
          {["#2f7bf6", "#e4473e", "#ee9a2e"].map((c, i) => (
            <g key={c}>
              <circle cx="13" cy={16.5 + i * 16.5} r="5.200" fill="none" stroke={c} strokeWidth="1.400" />
              <circle cx="13" cy={16.5 + i * 16.5} r="3.600" fill={c} />
              <path d={`M25 ${16.5 + i * 16.5}h33`} stroke="#b9b9be" strokeWidth="1.400" />
            </g>
          ))}
        </Tile>
        <Tile className="bg-linear-to-b from-[#fbfbf9] to-[#e8e6df]">
          <path d="M0 0h66v16.500H0z" fill="#f8cf47" />
          <path d="M0 17h66" stroke="#c9a93b" strokeWidth="1" />
          <path d="M2 20h62" stroke="#c8c5bd" strokeWidth="2" strokeDasharray="1 1.800" />
          <path d="M0 33h66M0 49.500h66" stroke="#cfcdd0" strokeWidth="1.300" />
        </Tile>
        <Tile className="bg-white">
          <ellipse cx="26" cy="40" rx="18" ry="19" fill="#f28448" />
          <rect x="22" y="8" width="36" height="36" rx="5" fill="#5fcdf3" fillOpacity="0.920" />
          <path d="M13 43c3-14 7-22 10-20 4 3-3 16 1 18 5 1 9-18 14-18 4 1-3 16 1 17 4 0 7-9 9-10 3 0 1 6 6 4 3-2 3-4 4-5" fill="none" stroke="#1d3f66" strokeWidth="3.400" strokeLinecap="round" />
        </Tile>
        <Tile className="bg-linear-to-b from-[#ef6379] to-[#e6353f]">
          <path d="M24 18l24-7v32c0 4-3 7-7 7s-6-3-5-6c1-4 5-5 8-6V24l-16 5v20c0 4-4 7-8 6-4 0-6-3-5-6 1-4 5-5 9-6z" fill="#fff" />
        </Tile>
        <Tile className="bg-linear-to-b from-[#2c3b37] to-[#101416]">
          <FaApple x={7} y={20} size={24} color="#fff" />
          <text x="30" y="43" fontFamily="Inter" fontWeight="500" fontSize="24" fill="#fff">tv</text>
        </Tile>
        <Tile className="bg-white">
          <path d="M13 13h39v40H13z" fill="#e74a5e" />
          <path d="M13 13h13l26 34v6H39L13 19z" fill="#fff" />
          <path d="M13 24l24 29H13z" fill="#e74a5e" />
        </Tile>
        <Tile className="bg-linear-to-b from-[#57bbf6] to-[#3266ea]">
          <path d="M16 10h32l4 18q0 2-2 2H14q-2 0-2-2z" fill="#f4f4f6" />
          <path d="M31.500 30h3v25h-3z" fill="#d9dde4" />
          <path d="M23 54h20v3H23z" fill="#eef0f3" />
          <circle cx="32.500" cy="18" r="6" fill="#f0a133" />
          <path d="M32.500 18v-6a6 6 0 0 0-6 6z" fill="#5cb85c" />
          <path d="M32.500 18h-6a6 6 0 0 0 6 6z" fill="#9a4fc4" />
          <path d="M32.500 18v6a6 6 0 0 0 6-6z" fill="#3d86e8" />
        </Tile>
        <Tile className="bg-linear-to-b from-[#90ef70] to-[#5fcf43]">
          <rect x="12" y="43" width="8" height="13" rx="1.500" fill="#f6fbf4" />
          <rect x="23.500" y="31" width="8" height="25" rx="1.500" fill="#f6fbf4" />
          <rect x="35" y="10" width="8" height="46" rx="1.500" fill="#f6fbf4" />
          <rect x="46" y="22" width="8" height="34" rx="1.500" fill="#f6fbf4" />
        </Tile>
        <Tile className="bg-linear-to-b from-[#f5b24b] to-[#ee8a36]">
          <path d="M52 12q3 1 2 5L21 49l-8 7 3-10z" fill="#f7f5f2" />
          <path d="M13 56l3-10 5 3z" fill="#d8d2ca" />
          <path d="M20 56h36" stroke="#fbd9ae" strokeWidth="2" />
        </Tile>
        <Tile className="bg-linear-to-b from-[#4bb0ee] to-[#2a5bdc]">
          <path d="M29 14 48 46M37 14 21 40M13 40.500h26M45 40.500h8M18 46l-3 6M48 46l3 6" stroke="#fff" strokeWidth="4.800" strokeLinecap="round" />
        </Tile>
        <Tile className="bg-linear-to-b from-[#dde5ec] to-[#96928e]">
          <circle cx="33" cy="33" r="26" fill="#55585c" stroke="#2c2e31" strokeWidth="4" strokeDasharray="2 1" />
          <circle cx="33" cy="33" r="20" fill="#77797c" stroke="#2f3134" strokeWidth="3" />
          <path d="M33 33h19M33 33l-9.500-16.500M33 33l-9.500 16.500" stroke="#3b3d40" strokeWidth="4" />
          <circle cx="33" cy="33" r="5" fill="#a9abae" stroke="#2f3134" strokeWidth="2" />
        </Tile>
        <Tile running className="bg-[#c3c5c3]">
          <rect x="19.500" y="5" width="27" height="56" rx="5" fill="#1b2a3a" />
          <path d="M21 9q0-3 3-3h12q2 12-6 26l-9 14z" fill="#f2a595" />
          <path d="M36 6h6q3 0 3 3v12L31 38q8-16 5-32z" fill="#64727f" />
          <path d="M45 21v36q0 3-3 3H24q-3 0-3-3V46l10-8z" fill="#1c5a7c" />
          <rect x="29" y="7" width="8" height="3" rx="1.500" fill="#000" />
        </Tile>
        <Tile className="bg-linear-to-b from-[#b667dc] to-[#8c3fb8]">
          <rect x="5" y="5" width="56" height="56" rx="11" fill="#ad5bdc" />
          <path d="M19 16h28q6 0 6 6v16q0 6-6 6H30l-7 8v-8h-4q-6 0-6-6V22q0-6 6-6z" fill="#fff" />
          <path d="M33 21v11" stroke="#a04fd0" strokeWidth="4" strokeLinecap="round" />
          <circle cx="33" cy="38" r="2.300" fill="#a04fd0" />
        </Tile>
      </div>

      <span className="ml-[30px] mt-[-2px] h-[76px] w-0.5 bg-black/45" />

      <div className="ml-[26px] flex gap-[19.1px]">
        <Tile running className="bg-[#d8c665]">
          <path d="M0 0h66v44Q58 58 50 59H10Q0 59 0 48z" fill="#fbee97" />
          <path d="M66 44Q58 58 50 59q2-5 0-8 8 0 16-7z" fill="#e8d777" />
          <path d="M12 22c1-6 1-11 3-11s-1 9 2 9 5-8 7-6-1 7 2 7 5-5 9-2c4 2 12 1 20 1M11 32h44M11 43.500h24" stroke="#d6c46a" strokeWidth="3.600" fill="none" />
        </Tile>
        <Tile running className="bg-linear-to-b from-[#3d4362] to-[#20263a]">
          <circle cx="33" cy="33" r="22" fill="none" stroke="#5d6486" strokeWidth="4" strokeDasharray="1.200 10.300" />
          <circle cx="33" cy="33" r="13" fill="#20253a" />
          <path d="M5.500 47V16q0-8 8-10" stroke="#e8564c" strokeWidth="3" fill="none" />
          <path d="M18 5.500h30" stroke="#f3d245" strokeWidth="3" />
          <path d="M52 6q8 1 8.500 10v31" stroke="#7fe08b" strokeWidth="3" fill="none" />
          <path d="M5.500 51q1 9 9 10h37q8-1 9-10" stroke="#5fa5f0" strokeWidth="3" fill="none" />
          <circle cx="33" cy="33" r="4.500" fill="#b9bdd0" stroke="#fff" strokeWidth="1.500" />
          <path d="M31 37 22 53M28 38l-8 8v6l5-5z" stroke="#fff" strokeWidth="2" fill="none" strokeLinecap="round" />
        </Tile>
        <Tile running className="bg-[#20133f]">
          <path d="M10 16c2 3 5 5 8 6l-1-6c3 1 7 4 8 8 5-1 9-4 9-9 0-6 4-9 7-11-1 7 6 11 10 15 5-1 6 2 5 4 7 12 4 28-8 35-13 7-30 3-38-10C2 36 4 24 10 16z" fill="#2f9df2" />
          <path d="M41 4c-1 7 6 11 10 16 4 6 5 14 2 21-3-12-10-14-19-16 4-4 3-14 7-21z" fill="#64d2fb" />
          <circle cx="33" cy="34" r="12" fill="#2a2f9c" />
          <path d="M10 24c4-1 10-1 14 3l10 1c-2 4-6 4-9 5 0 6 6 11 14 9-8 6-22 3-27-7-2-4-3-8-2-11z" fill="#6fd6fc" />
        </Tile>
        <Tile running className="bg-linear-to-b from-white to-[#dfe5f2]">
          <SiOpenai x={9} y={9} size={48} color="#22262e" />
        </Tile>
        <Tile running className="bg-[#f7f7f7]">
          <ChromeMark />
        </Tile>
        <Tile running className="bg-white">
          <path d="M43 10v14L15 47l-5-4v-2z" fill="#2a66ad" />
          <path d="M10 25v-2l5-4 28 24v13z" fill="#3a82cf" />
          <path d="M43 10l12 6v36l-12 5z" fill="#4599e6" />
        </Tile>
        <Tile running className="bg-[#cf7557]">
          <g transform="translate(33 33) scale(0.480)">
            <BurstRays color="#fdf3ee" />
          </g>
        </Tile>
        <Tile running className="bg-linear-to-b from-[#cfdbe4] to-[#6f7073]">
          <rect x="3" y="3" width="60" height="60" rx="12" fill="#050606" />
          <rect x="7" y="7" width="52" height="52" rx="7" fill="#1d2b2a" />
          <path d="M7 20h52M7 33h52M7 46h52M20 7v52M33 7v52M46 7v52" stroke="#3c504d" strokeWidth="1" />
          <path d="M7 36l5 1 3-2h3l1-25 3 36 2-9 5 2c3-12 6-12 9 0l4-4 4 2 8 1" stroke="#79e0bf" strokeWidth="1.500" fill="none" />
        </Tile>
        <Tile running className="bg-[#f7f7f7]">
          <ChromeMark />
          <path d="M0 22 22 0h17L0 37z" fill="#2f4ba3" />
          <text fontFamily="Roboto" fontWeight="700" fontSize="12" fill="#fff" transform="translate(7 29) rotate(-45)">BETA</text>
        </Tile>
        <Tile running className="bg-white">
          <SiBrave x={3} y={3} size={60} color="#dc5230" />
        </Tile>
        <Tile running className="bg-white">
          <path d="M8 14c6-6 14-4 15 4 1 10 0 26 7 40-12-4-26-24-22-44z" fill="#382a25" />
          <path d="M34 10c5-3 13 0 14 5 1 4-1 9-3 12 3 9 0 22-5 28-6 5-14 1-16-5-2-8 0-18 5-24z" fill="#6d5442" />
          <path d="M28 13c3-6 9-7 13-4M26 24c-4 10-4 20 0 28" stroke="#2b201c" strokeWidth="2" fill="none" />
          <circle cx="47" cy="47" r="12" fill="#69b1bd" />
          <text x="47" y="52" textAnchor="middle" fontFamily="Roboto" fontSize="14" fill="#fff">CE</text>
        </Tile>
        <Tile running className="bg-white">
          <circle cx="32.500" cy="37.500" r="15.500" fill="none" stroke="#7843cf" strokeWidth="9.500" />
          <path d="M48.500 12v26" stroke="#5a35cb" strokeWidth="9.500" strokeLinecap="round" />
        </Tile>
        <Tile running className="bg-[#f6f1ea]">
          <path d="M8 20c8 1 8 26 16 26 7 0 7-22 11-22s6 22 12 22c7 0 4-25 12-26" stroke="#0b1111" strokeWidth="6.500" fill="none" strokeLinejoin="round" />
        </Tile>
      </div>

      <span className="ml-7 mt-[-2px] h-[76px] w-0.5 bg-[#5e5a3c]" />

      <svg viewBox="0 0 53 76" className="-mt-[5px] ml-8 h-[76px] w-[53px]">
        <path d="M6 1h26l8 9v40H6z" fill="#e4e4e6" />
        <path d="M2 9h38l13 18v48H2z" fill="#f7f7f8" />
        <path d="M33 6l18 22-18-2z" fill="#fff" stroke="#c9c9cd" strokeWidth="1" />
        <path d="M38 14q5 0 4 5z" fill="#7843cf" />
        <rect x="23" y="1" width="7" height="45" rx="2" fill="#55585e" />
        <path d="M26.500 1v44" stroke="#c9cbd0" strokeWidth="4" strokeDasharray="1.500 1.500" />
        <text x="27" y="70" textAnchor="middle" fontFamily="Inter" fontSize="10" fill="#77787c">ZIP</text>
      </svg>
      <svg viewBox="0 0 58 76" className="-mt-[6px] ml-[31px] h-[76px] w-[58px]">
        <path d="M2 10 8 5l8-1 4-3 6 4 6-4 8 1 6 4 8 1 2 6-20 6-26-2z" fill="#f1f1f1" />
        <path d="M12 8l5 4M30 6l6 7M40 7l-5 5M45 10l-4 4M22 12l5-4" stroke="#6b6662" strokeWidth="2.400" />
        <path d="M19 12l5-3" stroke="#2f9cc4" strokeWidth="2.500" />
        <path d="M33 12l4-3" stroke="#c96a3c" strokeWidth="2" />
        <path d="M0 10c4 8 54 8 58 0l-6 58q-1 7-23 7T6 68z" fill="#ebebeb" fillOpacity="0.950" />
        <path d="M1 10c6 9 50 9 56 0" stroke="#bdbdbd" strokeWidth="1.300" fill="none" />
        <path d="M14 24q6 18 3 42M40 22q-3 20 2 42" stroke="#dfdfdf" strokeWidth="4" fill="none" />
      </svg>
    </div>
  );
}

export default function App() {
  return (
    <div className="flex h-[2234px] w-[3456px] flex-col overflow-hidden bg-black">
      <MenuBar />
      <div className="relative mt-0.5 flex h-[2038px] shrink-0 flex-col overflow-hidden rounded-[20px] bg-white font-['Roboto',sans-serif] shadow-[0_2px_0_#47484a]">
        <TabStrip />
        <Toolbar />
        <PreviewBanner />
        <AppHeader />
        <div className="flex min-h-0 flex-1">
          <Sidebar />
          <MessagesPage />
        </div>
        <div className="pointer-events-none absolute inset-x-0 bottom-0 h-[110px] bg-linear-to-t from-black/13 via-black/5 via-45% to-transparent [mask-image:linear-gradient(to_right,transparent,black_9%,black_94%,transparent)]" />
      </div>
      <div className="relative h-[120px] shrink-0 bg-[linear-gradient(to_right,#0b140b_0%,#0c150c_10%,#2a140d_13%,#2b130d_30%,#12180f_33%,#151c12_60%,#10160f_84%,#2a1c12_88%,#3a2819_92%)]">
        <div className="absolute right-0 top-0 h-[120px] w-[276px] overflow-hidden bg-linear-to-b from-[#0a0a06] via-[#d8d080] via-50% to-[#f3eb95] font-['Liberation_Sans',sans-serif] text-[24px] font-bold leading-8 text-black">
          <span className="absolute left-[209px] top-5 whitespace-nowrap">m/nicu</span>
          <span className="absolute left-[22px] top-[103px] whitespace-nowrap">git clone [https://github</span>
        </div>
        <div className="absolute inset-x-0 top-0 h-2 bg-black" />
        <div className="relative flex">
          <Dock />
        </div>
      </div>
    </div>
  );
}
